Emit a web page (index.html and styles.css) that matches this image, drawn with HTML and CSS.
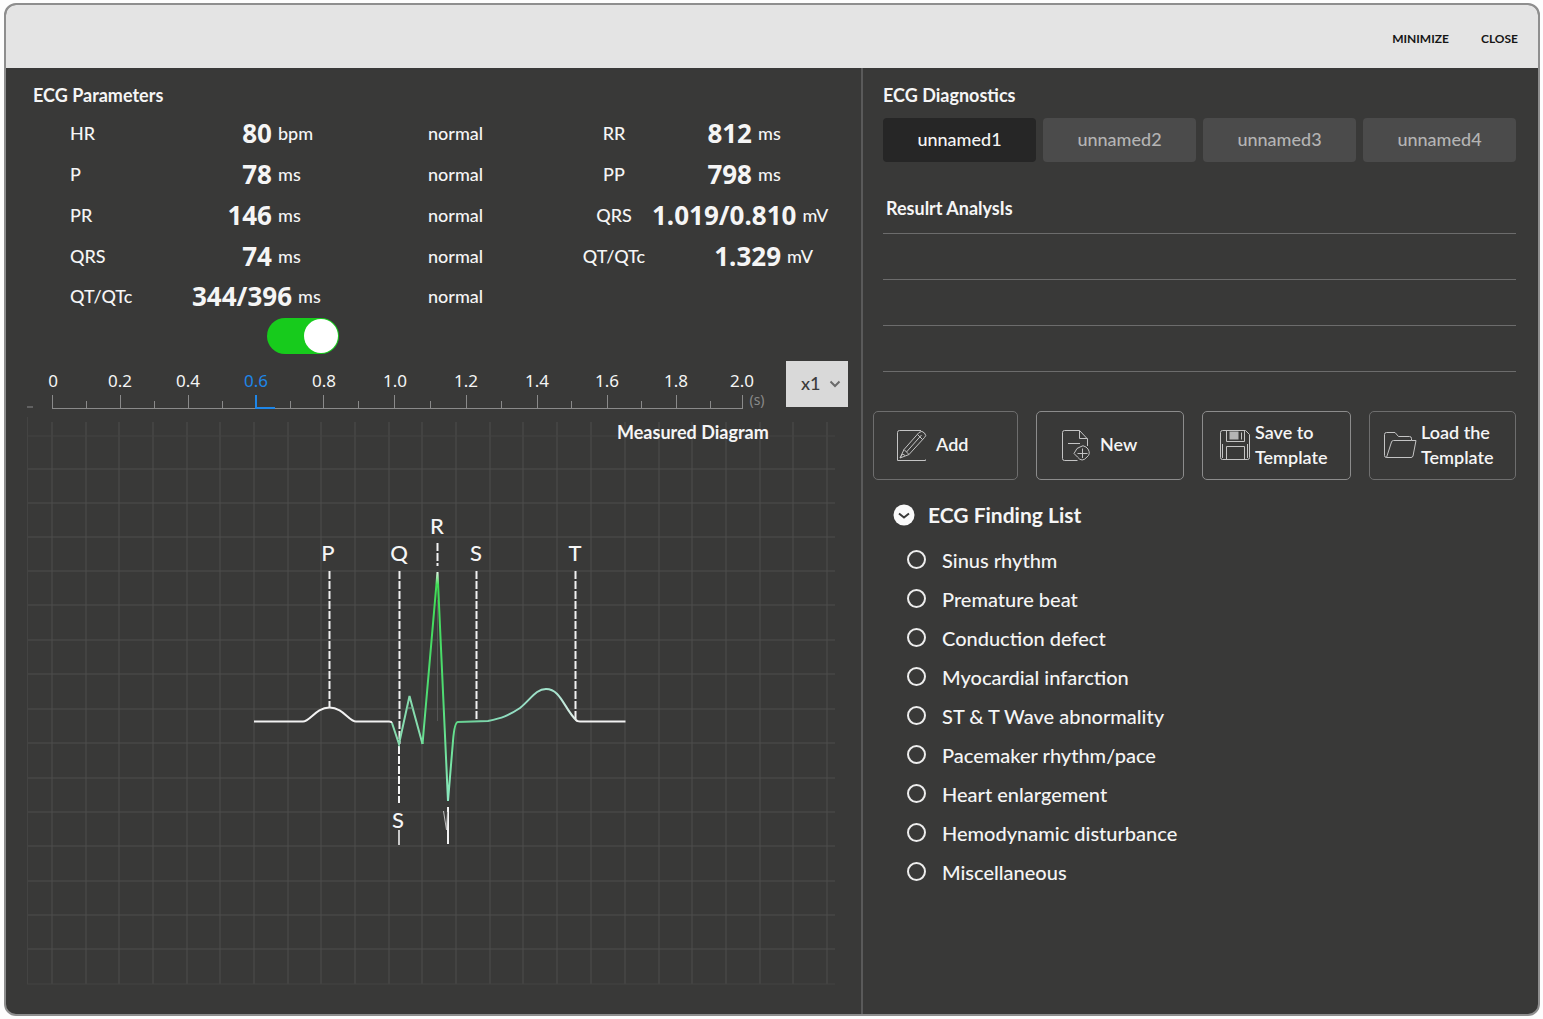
FILE: index.html
```html
<!DOCTYPE html>
<html lang="en">
<head>
<meta charset="utf-8">
<meta name="viewport" content="width=device-width, initial-scale=1">
<title>ECG Analysis</title>
<link rel="stylesheet" href="styles.css">
</head>
<body>
<div class="window">
  <header class="titlebar">
    <button type="button">MINIMIZE</button>
    <button type="button">CLOSE</button>
  </header>
  <main class="panes">
    <section class="measure">
      <h2>ECG Parameters</h2>
      <table class="params">
        <colgroup><col class="c-name"><col class="c-value"><col class="c-state"><col class="c-name2"><col class="c-value2"></colgroup>
        <tbody>
          <tr><th scope="row">HR</th><td><p class="reading"><b>80</b> bpm</p></td><td>normal</td><th scope="row" class="mid">RR</th><td><p class="reading amp"><b>812</b> ms</p></td></tr>
          <tr><th scope="row">P</th><td><p class="reading"><b>78</b> ms</p></td><td>normal</td><th scope="row" class="mid">PP</th><td><p class="reading amp"><b>798</b> ms</p></td></tr>
          <tr><th scope="row">PR</th><td><p class="reading"><b>146</b> ms</p></td><td>normal</td><th scope="row" class="mid">QRS</th><td><p class="reading amp"><b>1.019/0.810</b> mV</p></td></tr>
          <tr><th scope="row">QRS</th><td><p class="reading"><b>74</b> ms</p></td><td>normal</td><th scope="row" class="mid">QT/QTc</th><td><p class="reading amp long"><b>1.329</b> mV</p></td></tr>
          <tr class="last"><th scope="row">QT/QTc</th><td><p class="reading"><b>344/396</b> ms</p></td><td>normal</td><td></td><td></td></tr>
        </tbody>
      </table>
      <input type="checkbox" class="switch" aria-label="Live measurement" checked>
      <div class="scale">
        <svg class="ruler" viewBox="27 361 744 56" role="img" aria-label="Time scale in seconds">
          <path class="rule" d="M27 407h6M52 408.500H743M52.500 395v13M120.500 395v13M188.500 395v13M323.500 395v13M394.500 395v13M466.500 395v13M537.500 395v13M607.500 395v13M676.500 395v13M742.500 395v13M86.500 401v7M154.500 401v7M222.500 401v7M290.500 401v7M358.500 401v7M430.500 401v7M501.500 401v7M571.500 401v7M641.500 401v7M710.500 401v7"/>
          <path class="rule now" d="M256 395v13H275"/>
          <g class="ticks">
            <text x="53" y="387">0</text><text x="120" y="387">0.2</text><text x="188" y="387">0.4</text><text x="256" y="387" class="now">0.6</text><text x="324" y="387">0.8</text><text x="395" y="387">1.0</text><text x="466" y="387">1.2</text><text x="537" y="387">1.4</text><text x="607" y="387">1.6</text><text x="676" y="387">1.8</text><text x="742" y="387">2.0</text>
            <text x="757" y="405" class="unit">(s)</text>
          </g>
        </svg>
        <label class="zoom">
          <select aria-label="Zoom"><option>x1</option><option>x2</option><option>x4</option></select>
          <svg viewBox="0 0 12 8" aria-hidden="true"><path d="M1.500 1.500 6 6l4.500-4.500"/></svg>
        </label>
      </div>
      <svg class="diagram" viewBox="27 417 808 568" role="img" aria-label="Measured Diagram">
        <defs>
          <linearGradient id="spike" gradientUnits="userSpaceOnUse" x1="0" y1="571" x2="0" y2="803">
            <stop offset="0" stop-color="#eefbf0"/><stop offset=".06" stop-color="#3fdc55"/><stop offset=".55" stop-color="#4fdc74"/><stop offset="1" stop-color="#8fe8c2"/>
          </linearGradient>
          <linearGradient id="twave" gradientUnits="userSpaceOnUse" x1="456" y1="0" x2="580" y2="0">
            <stop offset="0" stop-color="#62cf8c"/><stop offset=".4" stop-color="#8fdcc0"/><stop offset=".8" stop-color="#a5e3cd"/><stop offset="1" stop-color="#f2f2f2"/>
          </linearGradient>
        </defs>
        <path class="grid" d="M52 422V984M86 422V984M119 422V984M153 422V984M187 422V984M220 422V984M254 422V984M288 422V984M321 422V984M355 422V984M389 422V984M422 422V984M456 422V984M490 422V984M523 422V984M557 422V984M591 422V984M625 422V984M659 422V984M692 422V984M726 422V984M760 422V984M793 422V984M827 422V984M27 469H835M27 503H835M27 537H835M27 571H835M27 605H835M27 640H835M27 674H835M27 709H835M27 743H835M27 778H835M27 812H835M27 846H835M27 881H835M27 915H835M27 949H835"/>
        <path class="grid faint" d="M27.500 417V984M27 436H835M27 984H835"/>
        <text class="caption" x="617" y="439">Measured Diagram</text>
        <path class="marker" d="M329.500 571V707M399.500 571V744M399 746V803M437.500 543V566M476.500 571V721M575.500 571V720"/>
        <path class="marker plain" d="M399 830V845"/>
        <path class="ghost" d="M437.500 600V721"/>
        <g class="waves">
          <text x="328" y="561">P</text><text x="399" y="561">Q</text><text x="437" y="534">R</text><text x="476" y="561">S</text><text x="575" y="561">T</text><text x="398" y="828">S</text>
        </g>
        <path class="trace" d="M254 721.500H303C310 721.500 316 707.500 329.500 707.500S349 721.500 356 721.500H389Q391.500 721.500 392 723"/>
        <path class="trace mint" d="M392 723 399 744 409.500 696 414 713 422.500 744"/>
        <path class="trace pale" d="M407 708H413"/>
        <path class="trace spike" d="M422.500 744 437.500 572 448 801 453 741Q454.500 722 458 722"/>
        <path class="trace twave" d="M458 722 488 721C502 718 508 716 520 708C531 699 536 689 546 689C561 689 564 709 577 721"/>
        <path class="trace" d="M576 720Q577 721.500 580 721.500H625.500"/>
        <path class="trace" d="M448 807V844"/>
        <path class="trace thin" d="M443.500 811 446.500 830 447.500 812"/>
      </svg>
    </section>
    <section class="diagnose">
      <h2>ECG Diagnostics</h2>
      <div class="tabs" role="tablist">
        <button type="button" role="tab" aria-selected="true">unnamed1</button>
        <button type="button" role="tab" aria-selected="false">unnamed2</button>
        <button type="button" role="tab" aria-selected="false">unnamed3</button>
        <button type="button" role="tab" aria-selected="false">unnamed4</button>
      </div>
      <h3>Resulrt AnalysIs</h3>
      <div class="lines">
        <input type="text" aria-label="Analysis line 1">
        <input type="text" aria-label="Analysis line 2">
        <input type="text" aria-label="Analysis line 3">
      </div>
      <div class="actions">
        <button type="button" class="dim roomy"><svg viewBox="0 0 32 32" aria-hidden="true"><path d="M25 1.500H3.500Q1.500 1.500 1.500 3.500V31.500H29.500V30.500M4 29 8 20.500 23 3.500Q26 1 28.500 4T28.500 8.500L13 25.500ZM8 20.500 13 25.500M10.500 23 25.500 6M21.500 5.500 26.500 10.500M4 29 6.500 25 9 26.500"/></svg><span>Add</span></button>
        <button type="button" class="roomy far"><svg viewBox="0 0 32 32" aria-hidden="true"><path d="M14 31.500H4.500Q2.500 31.500 2.500 29.500V3.500Q2.500 1.500 4.500 1.500H19.500L27.500 10V17M19.500 1.500V9.500H27.500M8 14.500H20M14 31.500H17.500M17 19.500 20 18Q23 15.500 26 18L28 20Q31 25 27 28Q22 34 17.500 28L14 24.500ZM22.500 19.500V29M17.500 24.500H27.500"/></svg><span>New</span></button>
        <button type="button" class="snug"><svg viewBox="0 0 32 32" aria-hidden="true"><path d="M3.500 1.500H26.500L30.500 5.500V28.500Q30.500 30.500 28.500 30.500H3.500Q1.500 30.500 1.500 28.500V3.500Q1.500 1.500 3.500 1.500ZM7.500 1.500V12.500H25.500V1.500M7.500 30V17.500H25.500V30M3.500 15V29M28.500 15V29"/><path class="fill" d="M10.500 2.500H19.500V10.500H10.500Z"/><path d="M22.500 3.500V10.500"/></svg><span>Save to Template</span></button>
        <button type="button" class="dim snug"><svg class="wide" viewBox="0 0 34 32" aria-hidden="true"><path d="M3.500 28.500Q1.500 28.500 1.500 26.500V5.500Q1.500 3.500 3.500 3.500H12L15.500 7.500H26.500Q28.500 7.500 28.500 9.500V11.500H33L30 27Q29.500 28.500 28 28.500H3.500L8.500 13Q9 11.500 10.500 11.500H28.500"/></svg><span>Load the Template</span></button>
      </div>
      <details class="findings" open>
        <summary><svg viewBox="0 0 22 22" aria-hidden="true"><circle cx="11" cy="11" r="10.500"/><path d="M6 9.500 11 13.500 16 9.500"/></svg>ECG Finding List</summary>
        <div class="options">
          <label><input type="radio" name="finding">Sinus rhythm</label>
          <label><input type="radio" name="finding">Premature beat</label>
          <label><input type="radio" name="finding">Conduction defect</label>
          <label><input type="radio" name="finding">Myocardial infarction</label>
          <label><input type="radio" name="finding">ST &amp; T Wave abnormality</label>
          <label><input type="radio" name="finding">Pacemaker rhythm/pace</label>
          <label><input type="radio" name="finding">Heart enlargement</label>
          <label><input type="radio" name="finding">Hemodynamic disturbance</label>
          <label><input type="radio" name="finding">Miscellaneous</label>
        </div>
      </details>
    </section>
  </main>
</div>
</body>
</html>
```
FILE: styles.css
```css
* { box-sizing: border-box; }
body {
  margin: 0;
  padding: 3px 3px 3px 4px;
  background: #fdfdfd;
  color: #f5f5f5;
  font: 500 18px/24px Lato, "Noto Sans", sans-serif;
}
h2, h3, p { margin: 0; }
button, input, select { font: inherit; color: inherit; margin: 0; }
button { cursor: pointer; }

.window {
  display: flex;
  flex-direction: column;
  min-height: calc(100vh - 6px);
  border: 2px solid #8e8e8e;
  border-radius: 12px;
  background: #393938;
  overflow: hidden;
}
.titlebar {
  display: flex;
  justify-content: flex-end;
  align-items: center;
  gap: 32px;
  height: 63px;
  padding: 4px 20px 0 0;
  background: #e4e4e4;
}
.titlebar button {
  padding: 0;
  border: 0;
  background: none;
  color: #161616;
  font-size: 12px;
  font-weight: 700;
}
.panes {
  flex: 1;
  display: grid;
  grid-template-columns: 857fr 675fr;
}
h2, h3 { font-size: 18px; font-weight: 700; line-height: 24px; }

.measure {
  padding: 15px 13px 24px 21px;
  border-right: 2px solid #5a5a5a;
}
.measure h2 { padding-left: 6px; }

.params {
  width: 100%;
  table-layout: fixed;
  border-collapse: collapse;
  margin-top: 5px;
}
.params tr { height: 41px; }
.params tr.last { height: 40px; }
.params th, .params td { padding: 0; font-weight: 500; text-align: left; }
.params th:first-child { padding-left: 43px; }
.params th.mid { text-align: center; }
.c-name { width: 165px; }
.c-value { width: 236px; }
.c-state { width: 148px; }
.c-name2 { width: 76px; }
.reading { display: flex; align-items: center; gap: 6px; line-height: 36px; white-space: nowrap; }
.reading b { min-width: 80px; text-align: right; font: 700 26px/36px "Noto Sans", sans-serif; }
.reading.amp b { min-width: 100px; }
.reading.long b { min-width: 129px; }

.switch {
  appearance: none;
  display: block;
  width: 72px;
  height: 36px;
  margin: 2px 0 0 240px;
  padding: 1px;
  border-radius: 18px;
  background: #17cb1c;
}
.switch::before {
  content: "";
  display: block;
  width: 34px;
  height: 34px;
  border-radius: 50%;
  background: #fff;
}
.switch:checked::before { margin-left: auto; }

.scale { display: flex; align-items: flex-start; gap: 15px; margin-top: 7px; }
.ruler { flex: 1; min-width: 0; display: block; }
.rule { fill: none; stroke: #8a8a8a; }
.rule.now { stroke: #1e86e8; stroke-width: 2; }
.ticks { fill: #f5f5f5; font: 400 17px "Noto Sans", sans-serif; text-anchor: middle; }
.ticks .now { fill: #1e86e8; }
.ticks .unit { fill: #8a8a8a; font-size: 14px; }
.zoom {
  display: grid;
  align-items: center;
  width: 62px;
  height: 46px;
  background: #d9d9d9;
}
.zoom select, .zoom svg { grid-area: 1 / 1; }
.zoom select {
  appearance: none;
  height: 46px;
  padding: 0 0 2px 15px;
  border: 0;
  background: none;
  color: #3c3c3c;
}
.zoom svg {
  justify-self: end;
  width: 12px;
  margin-right: 7px;
  fill: none;
  stroke: #6b6b6b;
  stroke-width: 2;
  pointer-events: none;
}

.diagram { display: block; width: calc(100% - 13px); }
.grid { fill: none; stroke: #4e4e4d; }
.grid.faint { stroke: #444443; }
.caption { fill: #f5f5f5; font-weight: 700; }
.marker { stroke: #f2f2f2; stroke-width: 2; stroke-dasharray: 8 2; }
.marker.plain { stroke: #c8c8c8; stroke-dasharray: none; }
.ghost { stroke: #555; }
.waves { fill: #f5f5f5; font-size: 22px; text-anchor: middle; }
.trace { fill: none; stroke: #f2f2f2; stroke-width: 2; }
.trace.mint { stroke: #86dcae; }
.trace.pale { stroke: #6fae8b; stroke-width: 1; }
.trace.spike { stroke: url(#spike); }
.trace.twave { stroke: url(#twave); }
.trace.thin { stroke: #bdbdbd; stroke-width: 1; }

.diagnose { padding: 15px 22px 24px 20px; }
.tabs { display: grid; grid-template-columns: repeat(4, 1fr); gap: 7px; margin-top: 11px; }
.tabs button {
  height: 44px;
  padding: 0 0 2px;
  border: 0;
  border-radius: 4px;
  background: #4b4b4b;
  color: #b4b4b4;
}
.tabs [aria-selected="true"] { background: #262626; color: #f5f5f5; }
h3 { margin-top: 34px; padding: 0 0 13px 3px; border-bottom: 1px solid #6c6c6c; }
.lines input {
  display: block;
  width: 100%;
  height: 46px;
  padding: 0 4px;
  border: 0;
  border-bottom: 1px solid #6c6c6c;
  background: none;
}
.actions {
  display: grid;
  grid-template-columns: 145fr 148fr 149fr 147fr;
  gap: 18px;
  margin: 39px 0 0 -10px;
}
.actions button {
  display: flex;
  align-items: center;
  gap: 4px;
  height: 69px;
  padding: 0 0 2px 16px;
  border: 1px solid #8c8c8c;
  border-radius: 5px;
  background: none;
  font-weight: 600;
  line-height: 25px;
  text-align: left;
}
.actions .dim { border-color: #6e6e6e; }
.actions .roomy { padding-left: 22px; gap: 8px; }
.actions .far { padding-left: 23px; }
.actions .snug { padding-left: 16px; }
.actions .dim.snug { padding-left: 13px; }
.actions svg { flex: none; width: 32px; height: 32px; fill: none; stroke: #c4c4c4; }
.actions svg.wide { width: 34px; }
.actions .fill { fill: #b4b4b4; stroke: none; }

.findings { margin-top: 23px; padding-left: 10px; }
.findings summary {
  display: flex;
  align-items: center;
  gap: 13px;
  font-size: 21px;
  font-weight: 700;
  list-style: none;
}
.findings summary svg { width: 22px; height: 22px; fill: #fafafa; }
.findings summary path { fill: none; stroke: #393938; stroke-width: 2; }
.options { padding: 13px 0 0 14px; }
.options label {
  display: flex;
  align-items: center;
  gap: 16px;
  height: 39px;
  font-size: 20px;
}
.options input {
  appearance: none;
  width: 19px;
  height: 19px;
  border: 2px solid #ededed;
  border-radius: 50%;
}
.options input:checked { background: #ededed; box-shadow: inset 0 0 0 3px #393938; }
```
